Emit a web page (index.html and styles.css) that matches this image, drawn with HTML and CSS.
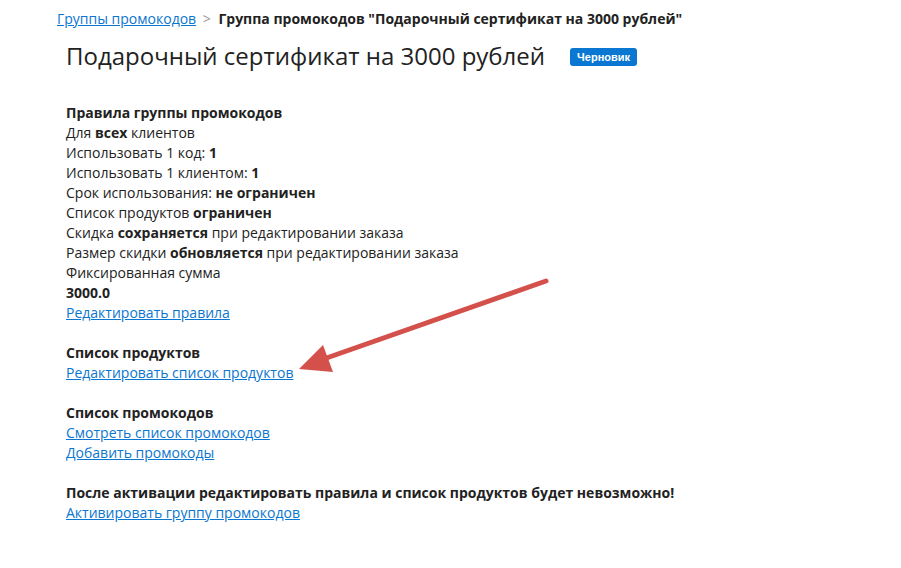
FILE: index.html
```html
<!DOCTYPE html>
<html lang="ru">
<head>
    <meta charset="UTF-8">
    <title>Группа промокодов</title>
    <link rel="stylesheet" href="styles.css">
</head>
<body>
    <div class="page">
        <div class="breadcrumbs">
            <a href="#">Группы промокодов</a>
            <span class="sep">&gt;</span>
            <span class="current">Группа промокодов "Подарочный сертификат на 3000 рублей"</span>
        </div>
        <div class="content">
            <div class="title-row">
                <h1>Подарочный сертификат на 3000 рублей</h1>
                <span class="badge">Черновик</span>
            </div>

            <div class="section">
                <div class="section-title">Правила группы промокодов</div>
                <div>Для <b>всех</b> клиентов</div>
                <div>Использовать 1 код: <b>1</b></div>
                <div>Использовать 1 клиентом: <b>1</b></div>
                <div>Срок использования: <b>не ограничен</b></div>
                <div>Список продуктов <b>ограничен</b></div>
                <div>Скидка <b>сохраняется</b> при редактировании заказа</div>
                <div>Размер скидки <b>обновляется</b> при редактировании заказа</div>
                <div>Фиксированная сумма</div>
                <div><b>3000.0</b></div>
                <div><a href="#">Редактировать правила</a></div>
            </div>

            <div class="section">
                <div class="section-title">Список продуктов</div>
                <div><a href="#">Редактировать список продуктов</a></div>
            </div>

            <div class="section">
                <div class="section-title">Список промокодов</div>
                <div><a href="#">Смотреть список промокодов</a></div>
                <div><a href="#">Добавить промокоды</a></div>
            </div>

            <div class="section">
                <div class="section-title">После активации редактировать правила и список продуктов будет невозможно!</div>
                <div><a href="#">Активировать группу промокодов</a></div>
            </div>
        </div>
    </div>

    <!-- стрелка-пометка поверх страницы -->
    <svg class="arrow" width="901" height="568" viewBox="0 0 901 568">
        <line x1="546" y1="281" x2="318" y2="361" stroke="#d3514a" stroke-width="5" stroke-linecap="round"/>
        <polygon points="299,369 323,345 333,372" fill="#d3514a"/>
    </svg>
</body>
</html>
```

FILE: styles.css
```css
body {
    margin: 0;
    font-family: "Open Sans", Arial, sans-serif;
    font-size: 14px;
    line-height: 20px;
    color: #222;
    background-color: #fff;
}
a {
    color: #0b76cf;
    text-decoration: underline;
}
.page {
    padding: 9px 0 0 57px;
}
.breadcrumbs {
    height: 20px;
}
.breadcrumbs .sep {
    color: #999;
    margin: 0 4px 0 3px;
}
.breadcrumbs .current {
    font-weight: bold;
}
.content {
    padding-left: 9px;
}
.title-row {
    display: flex;
    align-items: center;
    margin-top: 11px;
}
h1 {
    margin: 0;
    font-size: 24px;
    font-weight: normal;
    line-height: 32px;
    color: #222;
}
.badge {
    margin-left: 25px;
    margin-top: 2px;
    background-color: #0a78d2;
    color: #fff;
    font-family: "Liberation Sans", Arial, sans-serif;
    font-size: 11px;
    font-weight: bold;
    line-height: 18px;
    padding: 0 7px;
    border-radius: 3px;
}
.section {
    margin-top: 20px;
}
.title-row + .section {
    margin-top: 31px;
}
.section-title {
    font-weight: bold;
}
.arrow {
    position: absolute;
    left: 0;
    top: 0;
    pointer-events: none;
}
```
